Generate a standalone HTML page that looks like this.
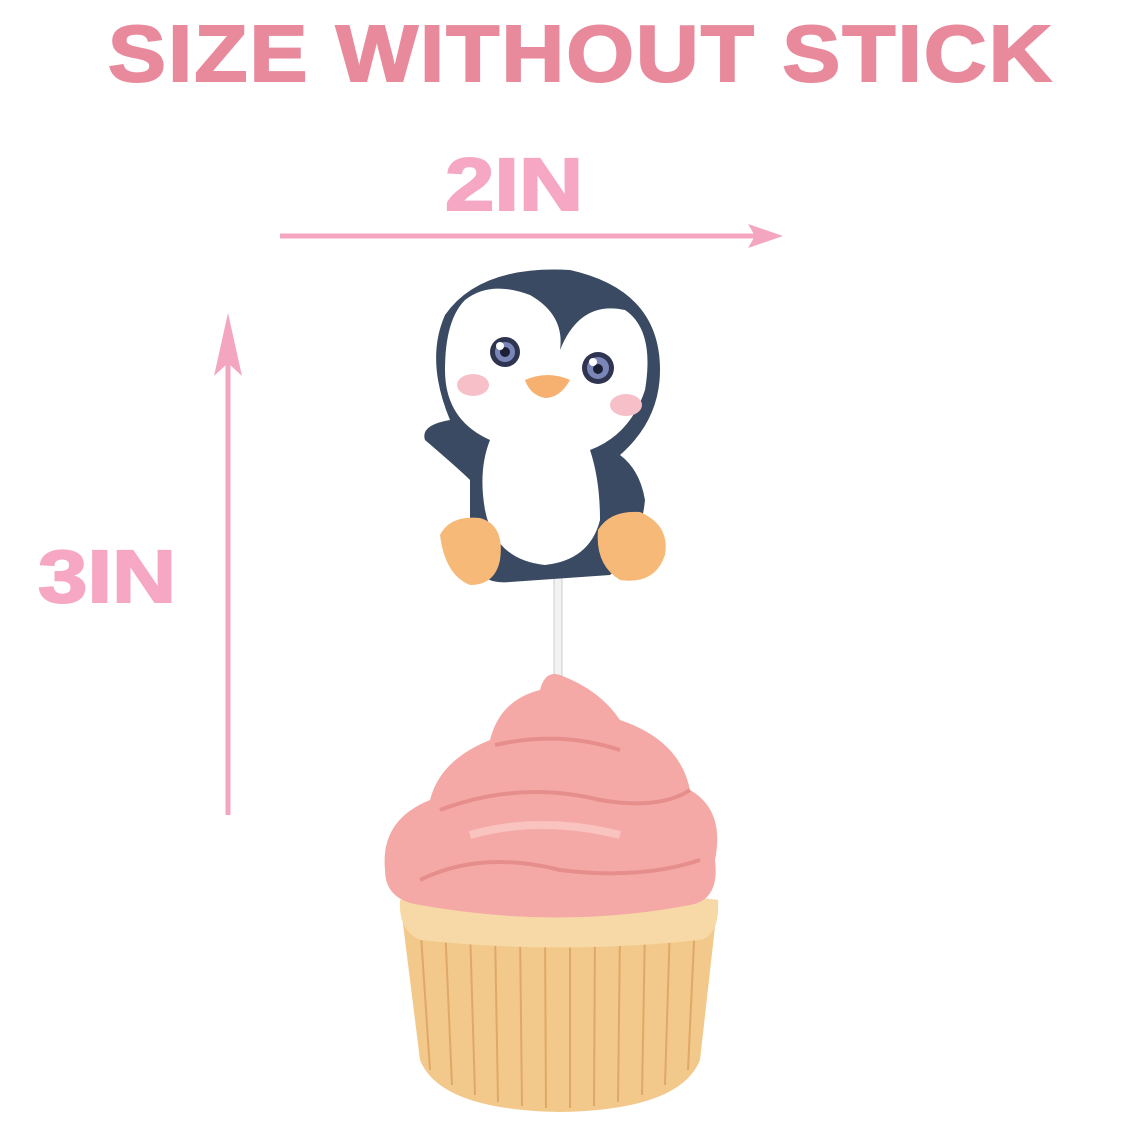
<!DOCTYPE html>
<html><head><meta charset="utf-8"><style>
html,body{margin:0;padding:0;background:#fff;}
body{width:1140px;height:1140px;position:relative;overflow:hidden;font-family:"Liberation Sans",Arial,sans-serif;}
.t{position:absolute;font-weight:900;white-space:nowrap;transform-origin:0 0;}
</style></head><body>
<div class="t" style="left:108px;top:8px;font-size:80px;color:#e88a9c;letter-spacing:2px;transform:scaleX(1.085);-webkit-text-stroke:2px #e88a9c;">SIZE WITHOUT STICK</div>
<div class="t" style="left:445px;top:142px;font-size:74px;color:#f6a7c3;transform:scaleX(1.2);-webkit-text-stroke:2px #f6a7c3;">2IN</div>
<div class="t" style="left:38px;top:534px;font-size:74px;color:#f6a7c3;transform:scaleX(1.2);-webkit-text-stroke:2px #f6a7c3;">3IN</div>
<svg width="1140" height="1140" style="position:absolute;left:0;top:0">
<line x1="280" y1="236" x2="760" y2="236" stroke="#f4a6c0" stroke-width="5"/>
<polygon points="783,236 748,224 755,236 748,248" fill="#f4a6c0"/>
<line x1="228" y1="340" x2="228" y2="815" stroke="#f4a6c0" stroke-width="5"/>
<polygon points="228,313 214,376 228,363 242,376" fill="#f4a6c0"/>
<rect x="554" y="575" width="8" height="170" fill="#f2f2f2" stroke="#ccc" stroke-width="1"/>
<path d="M400,900 Q560,880 718,900 L700,1060 Q680,1110 560,1112 Q440,1110 420,1060 Z" fill="#f2c98a"/>
<g stroke="#e0a868" stroke-width="2">
<line x1="420" y1="920" x2="430" y2="1070"/><line x1="445" y1="925" x2="452" y2="1085"/><line x1="470" y1="928" x2="475" y2="1095"/><line x1="495" y1="930" x2="498" y2="1102"/><line x1="520" y1="930" x2="522" y2="1106"/><line x1="545" y1="930" x2="546" y2="1108"/><line x1="570" y1="930" x2="570" y2="1108"/><line x1="595" y1="930" x2="594" y2="1106"/><line x1="620" y1="930" x2="618" y2="1102"/><line x1="645" y1="928" x2="642" y2="1095"/><line x1="670" y1="925" x2="665" y2="1085"/><line x1="695" y1="920" x2="688" y2="1070"/>
</g>
<path d="M400,900 Q560,880 718,900 Q720,935 700,940 Q560,955 420,940 Q398,930 400,900Z" fill="#f7d9a8"/>
<path d="M385,870 Q380,820 430,800 Q440,760 490,740 Q500,700 540,690 Q545,670 560,675 Q600,690 620,720 Q680,740 690,790 Q725,810 715,860 Q720,900 690,905 Q560,930 420,905 Q385,900 385,870Z" fill="#f5a9a6"/>
<path d="M420,880 Q480,850 560,870 Q640,880 700,860" stroke="#e58e8c" stroke-width="4" fill="none"/>
<path d="M440,810 Q520,780 600,800 Q660,810 690,790" stroke="#e58e8c" stroke-width="4" fill="none"/>
<path d="M495,745 Q560,730 620,750" stroke="#e58e8c" stroke-width="4" fill="none"/>
<path d="M470,835 Q540,815 620,835" stroke="#f9c3c0" stroke-width="8" fill="none"/>
<path d="M450,420 Q420,425 425,440 Q460,470 470,480 L470,560 Q480,585 510,582 L610,575 Q640,550 645,500 Q640,470 620,455 Q660,420 660,370 Q660,290 570,270 Q480,265 445,315 Q425,360 450,420Z" fill="#3a4a63"/>
<path d="M465,300 Q490,280 530,295 Q565,315 560,350 Q580,300 625,310 Q655,330 645,390 Q630,435 590,450 Q600,480 600,520 Q590,560 545,565 Q495,560 485,510 Q478,470 490,440 Q445,420 445,370 Q445,320 465,300Z" fill="#fff"/>
<ellipse cx="473" cy="385" rx="16" ry="11" fill="#f7c0c8"/>
<ellipse cx="626" cy="405" rx="16" ry="11" fill="#f7c0c8"/>
<circle cx="505" cy="352" r="15" fill="#2f3550"/><circle cx="505" cy="352" r="10" fill="#7a86b8"/><circle cx="505" cy="352" r="5" fill="#1c2036"/><circle cx="500" cy="346" r="4" fill="#fff"/>
<circle cx="598" cy="368" r="16" fill="#2f3550"/><circle cx="598" cy="368" r="11" fill="#7a86b8"/><circle cx="598" cy="369" r="5" fill="#1c2036"/><circle cx="593" cy="362" r="4" fill="#fff"/>
<path d="M525,380 Q548,370 570,380 Q560,398 545,398 Q530,395 525,380Z" fill="#f6b070"/>
<path d="M440,535 Q450,515 480,518 Q505,525 500,560 Q495,585 470,585 Q445,575 440,535Z" fill="#f7b978"/>
<path d="M598,530 Q610,510 640,512 Q670,525 665,555 Q655,585 620,580 Q595,565 598,530Z" fill="#f7b978"/>
</svg>
</body></html>
